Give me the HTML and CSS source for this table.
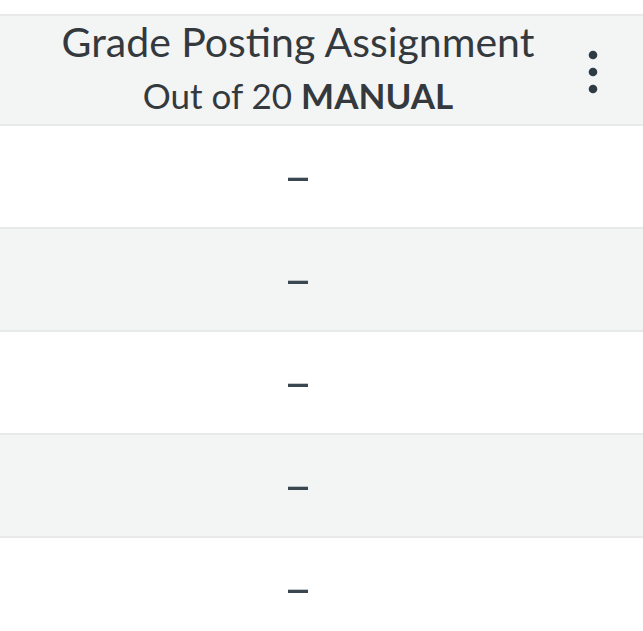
FILE: index.html
```html
<!DOCTYPE html>
<html>
<head>
<meta charset="utf-8">
<link rel="stylesheet" href="styles.css">
</head>
<body>
<div class="gradebook">
  <div class="col-header">
    <div class="col-title">
      <div class="name">Grade Posting Assignment</div>
      <div class="sub">Out of 20 <b>MANUAL</b></div>
    </div>
    <button class="menu" aria-label="Options">
      <svg width="12" height="44" viewBox="0 0 12 44"><circle cx="6" cy="5" r="4.3" fill="#2d3b45"/><circle cx="6" cy="22" r="4.3" fill="#2d3b45"/><circle cx="6" cy="39" r="4.3" fill="#2d3b45"/></svg>
    </button>
  </div>
  <div class="row"><span class="cell">–</span></div>
  <div class="row alt"><span class="cell">–</span></div>
  <div class="row"><span class="cell">–</span></div>
  <div class="row alt"><span class="cell">–</span></div>
  <div class="row"><span class="cell">–</span></div>
</div>
</body>
</html>
```

FILE: styles.css
```css
html, body {
  margin: 0;
  padding: 0;
  background: #ffffff;
  overflow: hidden;
}
body {
  font-family: Lato, "Open Sans", sans-serif;
  color: #2d3b45;
}
.gradebook {
  padding-top: 14px;
}
.col-header {
  position: relative;
  height: 108px;
  background: #f3f4f4;
  border-top: 2px solid #e7e9ea;
  border-bottom: 2px solid #e7e9ea;
}
.col-title {
  width: 596px;
  text-align: center;
  color: #34393d;
}
.name {
  font-size: 41px;
  line-height: 52px;
  white-space: nowrap;
}
.sub {
  font-size: 35px;
  line-height: 54px;
  white-space: nowrap;
}
.sub b {
  font-weight: 700;
}
.menu {
  position: absolute;
  left: 587px;
  top: 34px;
  width: 12px;
  height: 44px;
  padding: 0;
  margin: 0;
  border: 0;
  background: transparent;
  display: block;
}
.menu svg {
  display: block;
}
.row {
  height: 101px;
  border-bottom: 2px solid #e7e9ea;
  display: flex;
  align-items: center;
}
.row.alt {
  background: #f3f4f4;
}
.cell {
  width: 596px;
  text-align: center;
  font-size: 50px;
  line-height: 60px;
  padding-bottom: 4px;
  color: #3a4650;
}
```
